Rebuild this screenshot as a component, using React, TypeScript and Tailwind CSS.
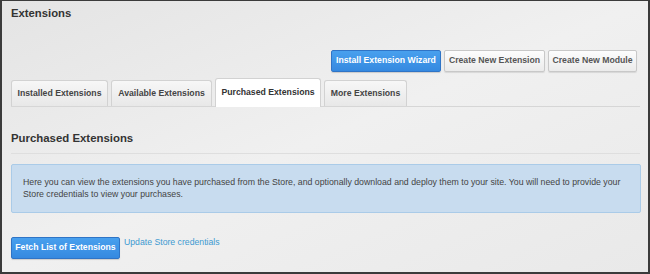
import React from "react";

const font = { fontFamily: '"Liberation Sans", Arial, sans-serif' };

export default function App() {
  return (
    <div
      className="w-[650px] h-[274px] border-l-2 border-r-2 border-b-2 border-t border-[#3b3b3b] bg-gradient-to-br from-[#e4e4e4] via-[#f0f0f0] to-[#e9e9e9] pl-[9px] pr-[8px] text-[#333]"
      style={font}
    >
      <div className="pt-[6px] text-[11.3px] leading-[13px] font-bold text-[#333]">Extensions</div>

      <div className="mt-[30px] flex justify-end gap-[3px] pr-[3px]">
        <button className="h-[22px] w-[110px] rounded-[2px] border border-[#2f74c6] bg-gradient-to-b from-[#48a0ee] to-[#3589e0] text-[8.7px] font-bold text-white shadow-[0_1px_1px_rgba(0,0,0,0.15)]">
          Install Extension Wizard
        </button>
        <button className="h-[22px] w-[101px] rounded-[2px] border border-[#c8c8c8] bg-gradient-to-b from-[#fdfdfd] to-[#ebebeb] text-[8.7px] font-bold text-[#555] shadow-[0_1px_1px_rgba(0,0,0,0.1)]">
          Create New Extension
        </button>
        <button className="h-[22px] w-[89px] rounded-[2px] border border-[#c8c8c8] bg-gradient-to-b from-[#fdfdfd] to-[#ebebeb] text-[8.7px] font-bold text-[#555] shadow-[0_1px_1px_rgba(0,0,0,0.1)]">
          Create New Module
        </button>
      </div>

      <div className="mt-[7px] flex items-end gap-[3px] border-b border-[#d6d6d6] h-[28px]">
        <div className="flex h-[26px] w-[97px] items-center justify-center rounded-t-[3px] border border-b-0 border-[#d2d2d2] bg-gradient-to-b from-[#f7f7f7] to-[#e8e8e8] text-[8.7px] font-bold text-[#444]">
          Installed Extensions
        </div>
        <div className="flex h-[26px] w-[101px] items-center justify-center rounded-t-[3px] border border-b-0 border-[#d2d2d2] bg-gradient-to-b from-[#f7f7f7] to-[#e8e8e8] text-[8.7px] font-bold text-[#444]">
          Available Extensions
        </div>
        <div className="-mb-px flex h-[29px] w-[106px] items-center justify-center rounded-t-[3px] border border-b-0 border-[#d2d2d2] bg-white text-[8.7px] font-bold text-[#333]">
          Purchased Extensions
        </div>
        <div className="flex h-[26px] w-[83px] items-center justify-center rounded-t-[3px] border border-b-0 border-[#d2d2d2] bg-gradient-to-b from-[#f7f7f7] to-[#e8e8e8] text-[8.7px] font-bold text-[#444]">
          More Extensions
        </div>
      </div>

      <div className="mt-[24px] border-b border-[#dedede] pb-[8px] text-[11.4px] leading-[14px] font-bold text-[#333]">
        Purchased Extensions
      </div>

      <div className="mt-[10px] mr-[-1px] h-[49px] rounded-[2px] border border-[#aacbe8] bg-[#c8dcef] px-[11px] pt-[11px] text-[8.75px] leading-[12px] text-[#444]">
        Here you can view the extensions you have purchased from the Store, and optionally download and deploy them to your site. You will need to provide your Store credentials to view your purchases.
      </div>

      <div className="mt-[24px] flex items-start gap-[4px]">
        <button className="h-[22px] w-[109px] rounded-[2px] border border-[#2f74c6] bg-gradient-to-b from-[#48a0ee] to-[#3589e0] text-[8.7px] font-bold text-white shadow-[0_1px_1px_rgba(0,0,0,0.15)]">
          Fetch List of Extensions
        </button>
        <span className="-mt-[1px] text-[8.7px] leading-[12px] text-[#3d9ad1]">Update Store credentials</span>
      </div>
    </div>
  );
}
